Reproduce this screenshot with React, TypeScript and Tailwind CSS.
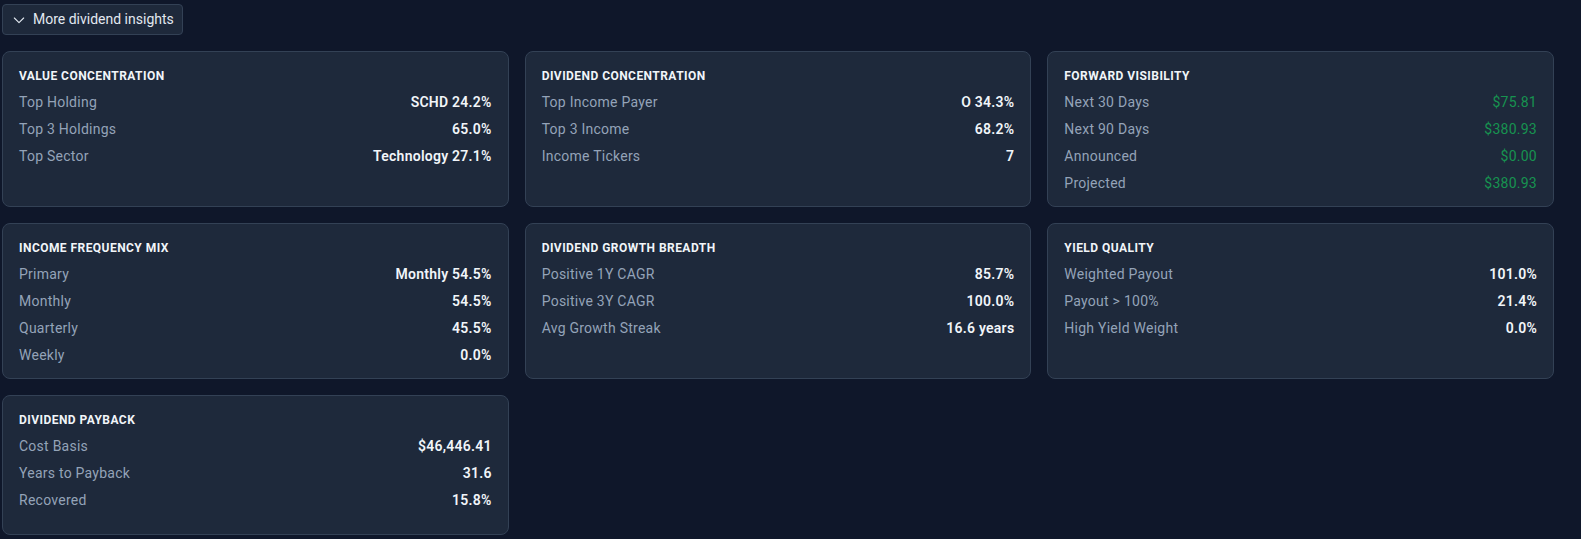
import React from "react";

type Row = { label: string; value: string; green?: boolean };
type Card = { title: string; rows: Row[]; minH?: boolean };

const cards: Card[] = [
  {
    title: "Value Concentration",
    rows: [
      { label: "Top Holding", value: "SCHD 24.2%" },
      { label: "Top 3 Holdings", value: "65.0%" },
      { label: "Top Sector", value: "Technology 27.1%" },
    ],
  },
  {
    title: "Dividend Concentration",
    rows: [
      { label: "Top Income Payer", value: "O 34.3%" },
      { label: "Top 3 Income", value: "68.2%" },
      { label: "Income Tickers", value: "7" },
    ],
  },
  {
    title: "Forward Visibility",
    rows: [
      { label: "Next 30 Days", value: "$75.81", green: true },
      { label: "Next 90 Days", value: "$380.93", green: true },
      { label: "Announced", value: "$0.00", green: true },
      { label: "Projected", value: "$380.93", green: true },
    ],
  },
  {
    title: "Income Frequency Mix",
    rows: [
      { label: "Primary", value: "Monthly 54.5%" },
      { label: "Monthly", value: "54.5%" },
      { label: "Quarterly", value: "45.5%" },
      { label: "Weekly", value: "0.0%" },
    ],
  },
  {
    title: "Dividend Growth Breadth",
    rows: [
      { label: "Positive 1Y CAGR", value: "85.7%" },
      { label: "Positive 3Y CAGR", value: "100.0%" },
      { label: "Avg Growth Streak", value: "16.6 years" },
    ],
  },
  {
    title: "Yield Quality",
    rows: [
      { label: "Weighted Payout", value: "101.0%" },
      { label: "Payout > 100%", value: "21.4%" },
      { label: "High Yield Weight", value: "0.0%" },
    ],
  },
  {
    title: "Dividend Payback",
    minH: true,
    rows: [
      { label: "Cost Basis", value: "$46,446.41" },
      { label: "Years to Payback", value: "31.6" },
      { label: "Recovered", value: "15.8%" },
    ],
  },
];

function InsightCard({ card }: { card: Card }) {
  return (
    <div
      className={
        "rounded-lg border border-[#334155] bg-[#1e293b] px-4 pt-4 pb-[13px] " +
        (card.minH ? "min-h-[140px]" : "")
      }
    >
      <div className="mb-2 text-[12px] leading-4 font-bold uppercase tracking-[0.45px] text-[#f1f5f9]">
        {card.title}
      </div>
      <div className="flex flex-col gap-[7px]">
        {card.rows.map((r) => (
          <div
            key={r.label}
            className="flex items-center justify-between text-[14px] leading-5 tracking-[0.25px]"
          >
            <span className="text-[#94a3b8]">{r.label}</span>
            <span className={r.green ? "text-[#179350]" : "font-semibold text-[#f1f5f9]"}>
              {r.value}
            </span>
          </div>
        ))}
      </div>
    </div>
  );
}

export default function App() {
  return (
    <div
      className="min-h-[539px] w-full bg-[#0f172a]"
      style={{ fontFamily: "Roboto, 'Noto Sans', 'Liberation Sans', sans-serif" }}
    >
      <div className="ml-[2px] w-[1552px] pt-[4px]">
        <button className="flex h-[31px] w-[181px] items-center gap-[6px] rounded-[4px] border border-[#334155] bg-[#1e293b] pl-[8px] text-[14px] text-[#e2e8f0]">
          <svg
            width="16"
            height="16"
            viewBox="0 0 24 24"
            fill="none"
            stroke="currentColor"
            strokeWidth="1.6"
            strokeLinecap="round"
            strokeLinejoin="round"
          >
            <path d="m5 9 7 7 7-7" />
          </svg>
          <span>More dividend insights</span>
        </button>
        <div className="mt-4 grid grid-cols-3 gap-4">
          {cards.map((c) => (
            <InsightCard key={c.title} card={c} />
          ))}
        </div>
      </div>
    </div>
  );
}
